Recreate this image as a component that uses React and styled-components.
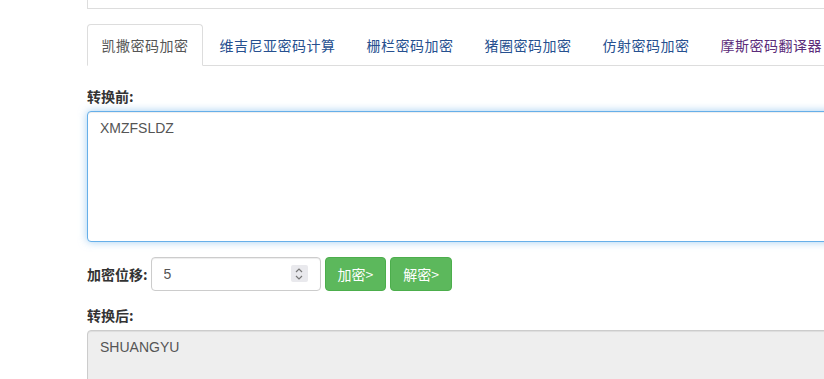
import { createGlobalStyle } from "styled-components";
import styled from "styled-components";

const GlobalStyle = createGlobalStyle`
  html, body {
    margin: 0;
    padding: 0;
    background: #fff;
    overflow: hidden;
  }
  body {
    font-family: "Liberation Sans", Arial, "Noto Sans CJK SC", sans-serif;
    font-size: 14px;
    line-height: 20px;
    color: #333;
  }
  * {
    box-sizing: border-box;
  }
`;

const tabs = [
  { label: "凯撒密码加密", active: true },
  { label: "维吉尼亚密码计算" },
  { label: "栅栏密码加密" },
  { label: "猪圈密码加密" },
  { label: "仿射密码加密" },
  { label: "摩斯密码翻译器", visited: true },
];

const App = () => {
  return (
    <>
      <GlobalStyle />
      <Page>
        <TopPanel />
        <TabBar>
          {tabs.map((tab) => (
            <Tab key={tab.label} $active={tab.active} $visited={tab.visited}>
              {tab.label}
            </Tab>
          ))}
        </TabBar>

        <FieldLabel>转换前:</FieldLabel>
        <InputArea defaultValue="XMZFSLDZ" />

        <ControlRow>
          <RowLabel>加密位移:</RowLabel>
          <NumberBox>
            <NumberInput defaultValue="5" />
            <Spinner>
              <svg width="10" height="14" viewBox="0 0 10 14">
                <path d="M2 5 L5 2 L8 5" fill="none" stroke="#777" strokeWidth="1.2" />
                <path d="M2 9 L5 12 L8 9" fill="none" stroke="#777" strokeWidth="1.2" />
              </svg>
            </Spinner>
          </NumberBox>
          <GreenButton>加密&gt;</GreenButton>
          <GreenButton>解密&gt;</GreenButton>
        </ControlRow>

        <FieldLabel>转换后:</FieldLabel>
        <OutputArea readOnly defaultValue="SHUANGYU" />
      </Page>
    </>
  );
};

export default App;

const Page = styled.div`
  width: 1100px;
  padding-left: 87px;
`;

const TopPanel = styled.div`
  height: 9px;
  border: 1px solid #ddd;
  border-top: none;
  border-right: none;
`;

const TabBar = styled.div`
  display: flex;
  margin-top: 15px;
  border-bottom: 1px solid #ddd;
`;

const Tab = styled.div`
  padding: 10px 13.5px;
  margin-right: 2px;
  margin-bottom: -1px;
  border: 1px solid transparent;
  border-radius: 4px 4px 0 0;
  font-family: "Noto Sans CJK SC", sans-serif;
  font-size: 14px;
  letter-spacing: 0.5px;
  line-height: 20px;
  color: ${(p) => (p.$visited ? "#5b2c7a" : "#26508f")};

  ${(p) =>
    p.$active &&
    `
    color: #555;
    background: #fff;
    border-color: #ddd #ddd transparent;
  `}
`;

const FieldLabel = styled.div`
  margin-top: 20px;
  margin-bottom: 5px;
  font-family: "Noto Sans CJK SC", sans-serif;
  font-weight: bold;
  font-size: 14px;
  line-height: 20px;
  color: #333;
`;

const textAreaBase = `
  display: block;
  width: 100%;
  padding: 6px 12px;
  border-radius: 4px;
  font-family: "Liberation Sans", Arial, sans-serif;
  font-size: 14px;
  line-height: 20px;
  color: #555;
  resize: none;
  outline: none;
`;

const InputArea = styled.textarea`
  ${textAreaBase}
  height: 131px;
  border: 1px solid #66afe9;
  box-shadow: inset 0 1px 1px rgba(0, 0, 0, 0.075), 0 0 8px rgba(102, 175, 233, 0.6);
`;

const OutputArea = styled.textarea`
  ${textAreaBase}
  height: 80px;
  border: 1px solid #ccc;
  background: #eee;
  box-shadow: inset 0 1px 1px rgba(0, 0, 0, 0.075);
`;

const ControlRow = styled.div`
  display: flex;
  align-items: center;
  gap: 4px;
  margin-top: 15px;
  margin-bottom: -6px;
`;

const RowLabel = styled.span`
  font-family: "Noto Sans CJK SC", sans-serif;
  font-weight: bold;
  font-size: 14px;
  color: #333;
`;

const NumberBox = styled.div`
  position: relative;
  width: 170px;
  height: 34px;
  margin-left: -1px;
`;

const NumberInput = styled.input`
  width: 100%;
  height: 100%;
  padding: 6px 12px;
  border: 1px solid #ccc;
  border-radius: 4px;
  box-shadow: inset 0 1px 1px rgba(0, 0, 0, 0.075);
  font-family: "Liberation Sans", Arial, sans-serif;
  font-size: 14px;
  color: #555;
  outline: none;
`;

const Spinner = styled.div`
  position: absolute;
  top: 8px;
  right: 13px;
  width: 17px;
  height: 17px;
  display: flex;
  align-items: center;
  justify-content: center;
  background: #e9e9ed;
  border-radius: 2px;
`;

const GreenButton = styled.button`
  height: 34px;
  padding: 6px 12px;
  border: 1px solid #4cae4c;
  border-radius: 4px;
  background: #5cb85c;
  color: #fff;
  font-family: "Noto Sans CJK SC", sans-serif;
  font-size: 14px;
  line-height: 20px;
  cursor: pointer;
`;
